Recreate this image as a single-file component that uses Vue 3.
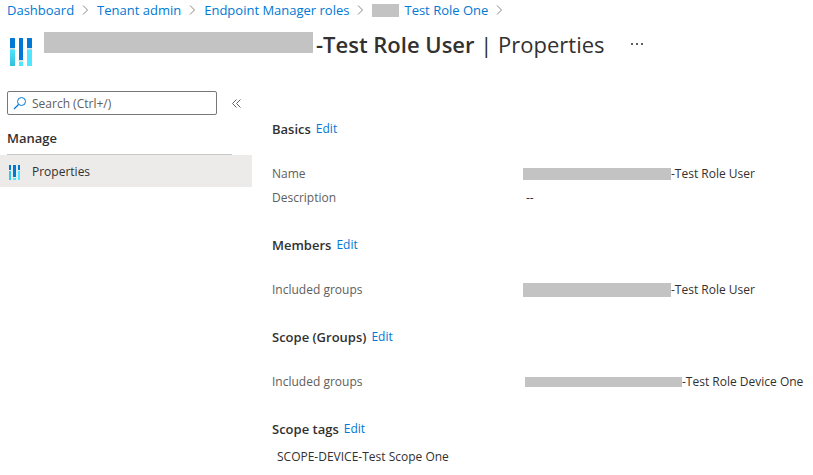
<script setup>
import { ref } from 'vue'

const search = ref('')

const crumbs = [
  { text: 'Dashboard' },
  { text: 'Tenant admin' },
  { text: 'Endpoint Manager roles' },
  { text: 'Test Role One', masked: true },
]

const sections = [
  {
    title: 'Basics',
    rows: [
      { label: 'Name', value: '-Test Role User', mask: 'short' },
      { label: 'Description', value: '--' },
    ],
  },
  {
    title: 'Members',
    rows: [{ label: 'Included groups', value: '-Test Role User', mask: 'tall' }],
  },
  {
    title: 'Scope (Groups)',
    rows: [{ label: 'Included groups', value: '-Test Role Device One', mask: 'long' }],
  },
  { title: 'Scope tags', rows: [], note: 'SCOPE-DEVICE-Test Scope One' },
]
</script>

<template>
  <div class="page">
    <nav class="crumbs" aria-label="Breadcrumb">
      <template v-for="crumb in crumbs" :key="crumb.text">
        <span v-if="crumb.masked" class="mask mask-crumb"></span>
        <a href="#">{{ crumb.text }}</a>
        <svg class="chevron" viewBox="0 0 7 12" aria-hidden="true">
          <path d="M1 1.5 5.5 6 1 10.5" fill="none" stroke="#8a8886" stroke-width="1" />
        </svg>
      </template>
    </nav>

    <header class="title-bar">
      <svg class="title-icon" viewBox="0 0 22 28" aria-hidden="true">
        <defs>
          <linearGradient id="cyan-bar" x1="0" y1="1" x2="0" y2="0">
            <stop offset="0" stop-color="#32bedd" />
            <stop offset="1" stop-color="#50e6ff" />
          </linearGradient>
        </defs>
        <path d="M0 .5Q0 0 .5 0h4q.5 0 .5.5V10H0zM9 .5Q9 0 9.500 0h3.500V22H9zM17 0h4.500q.5 0 .5.5V10h-5z" fill="#0078d4" />
        <path d="M0 11h5v16.500q0 .5-.5.5h-4q-.5 0-.5-.5z" fill="url(#cyan-bar)" />
        <path d="M9 23.500h4v4.500H9.500Q9 28 9 27.500zM17 11h5v16.500q0 .5-.5.5H17z" fill="#50e6ff" />
        <path d="M0 10h5v1.500H0zM8.500 22h5v1.500h-5zM17 10h5v1.500h-5z" fill="#dedede" />
      </svg>
      <span class="mask mask-title"></span>
      <h1><strong>-Test Role User</strong> | Properties</h1>
      <button class="more" type="button" aria-label="More">
        <svg viewBox="0 0 12 2" aria-hidden="true">
          <path d="M0 0h2v2H0zM5 0h2v2H5zM10 0h2v2h-2z" fill="#605e5c" />
        </svg>
      </button>
    </header>

    <div class="body">
      <aside class="side">
        <div class="search-row">
          <label class="search">
            <svg viewBox="0 0 14 14" aria-hidden="true">
              <circle cx="8.500" cy="5.500" r="4" fill="none" stroke="#0078d4" />
              <path d="M5.500 8.500 1 13" stroke="#0078d4" stroke-width="1.200" />
            </svg>
            <input v-model="search" type="text" placeholder="Search (Ctrl+/)" aria-label="Search" />
          </label>
          <button class="collapse" type="button" aria-label="Collapse menu">
            <svg viewBox="0 0 9 9" aria-hidden="true">
              <path d="M4.500.5l-4 4 4 4M8.500.5l-4 4 4 4" fill="none" stroke="#605e5c" />
            </svg>
          </button>
        </div>
        <h2>Manage</h2>
        <a class="nav-item" href="#">
          <svg viewBox="0 0 11 15" aria-hidden="true">
            <path d="M0 0h2v5H0zM4 0h3v12H4zM9 0h2v5H9z" fill="#0078d4" />
            <path d="M0 6h2v9H0z" fill="#32c8e8" />
            <path d="M4 13h3v2H4zM9 6h2v9H9z" fill="#50e6ff" />
          </svg>
          Properties
        </a>
      </aside>

      <main>
        <section v-for="section in sections" :key="section.title">
          <div class="heading">
            <h3>{{ section.title }}</h3>
            <a href="#">Edit</a>
          </div>
          <dl v-if="section.rows.length">
            <div v-for="row in section.rows" :key="row.label" class="row">
              <dt>{{ row.label }}</dt>
              <dd :class="{ plain: !row.mask, inset: row.mask === 'long' }">
                <span v-if="row.mask" :class="['mask', 'mask-' + row.mask]"></span>
                <span>{{ row.value }}</span>
              </dd>
            </div>
          </dl>
          <p v-if="section.note">{{ section.note }}</p>
        </section>
      </main>
    </div>
  </div>
</template>

<style>
body {
  background: #fff;
}
</style>

<style scoped>
.page {
  font-family: "Segoe UI", "Open Sans", "Noto Sans", sans-serif;
  font-size: 12px;
  line-height: 20px;
  color: #323130;
}
a {
  color: #0078d4;
  text-decoration: none;
}
button {
  padding: 0;
  border: 0;
  background: none;
  display: flex;
  cursor: pointer;
}
.mask {
  flex: none;
  background: #c3c3c3;
}
.crumbs {
  display: flex;
  align-items: center;
  padding-left: 7px;
  font-size: 13px;
  white-space: nowrap;
}
.chevron {
  width: 7px;
  height: 12px;
  margin: 0 8px;
}
.mask-crumb {
  width: 27px;
  height: 13px;
  margin-right: 5px;
}
.title-bar {
  display: flex;
  align-items: center;
  height: 48px;
  padding-left: 10px;
}
.title-icon {
  width: 22px;
  height: 28px;
  margin: 18px 12px 0 0;
  align-self: flex-start;
}
.mask-title {
  width: 269px;
  height: 21px;
  margin: 0 3px 4px 0;
}
h1 {
  margin: 0;
  font-size: 22px;
  font-weight: 400;
  line-height: 32px;
  white-space: nowrap;
}
strong {
  font-weight: 600;
}
.more {
  margin-left: 26px;
}
.more svg {
  width: 12px;
  height: 2px;
}
.body {
  display: grid;
  grid-template-columns: 252px 1fr;
}
.side {
  padding-top: 23px;
}
.search-row {
  display: flex;
  align-items: center;
  gap: 15px;
  padding-left: 7px;
}
.search {
  display: flex;
  align-items: center;
  gap: 5px;
  box-sizing: border-box;
  width: 210px;
  height: 24px;
  padding: 0 5px;
  border: 1px solid #7a7876;
  border-radius: 2px;
}
.search svg {
  flex: none;
  width: 14px;
  height: 14px;
}
input {
  flex: 1;
  min-width: 0;
  padding: 2px 0 0;
  border: 0;
  outline: 0;
  background: none;
  font: inherit;
  color: inherit;
}
input::placeholder {
  color: #605e5c;
  opacity: 1;
}
.collapse svg {
  width: 9px;
  height: 9px;
}
h2 {
  margin: 13px 20px 0 7px;
  padding-bottom: 6px;
  border-bottom: 1px solid #c8c6c4;
  font-size: 13px;
  font-weight: 600;
}
.nav-item {
  display: flex;
  align-items: center;
  gap: 12px;
  box-sizing: border-box;
  height: 32px;
  padding: 2px 0 0 9px;
  background: #edebe9;
  color: #323130;
}
.nav-item svg {
  width: 11px;
  height: 15px;
}
main {
  display: flex;
  flex-direction: column;
  gap: 25px;
  padding: 51px 0 0 20px;
}
.heading {
  display: flex;
  gap: 5px;
  height: 20px;
}
h3 {
  margin: 0;
  font-size: 13px;
  font-weight: 600;
}
dl {
  margin: 23px 0 0;
}
.row {
  display: grid;
  grid-template-columns: 251px 1fr;
  line-height: 24px;
}
dt {
  color: #605e5c;
}
dd {
  display: flex;
  align-items: center;
  margin: 0;
  white-space: nowrap;
}
.plain {
  padding-left: 3px;
}
.inset {
  padding-left: 2px;
}
.mask-short {
  width: 148px;
  height: 12px;
}
.mask-tall {
  width: 148px;
  height: 14px;
}
.mask-long {
  width: 157px;
  height: 10px;
}
p {
  margin: 8px 0 0 5px;
}
</style>
